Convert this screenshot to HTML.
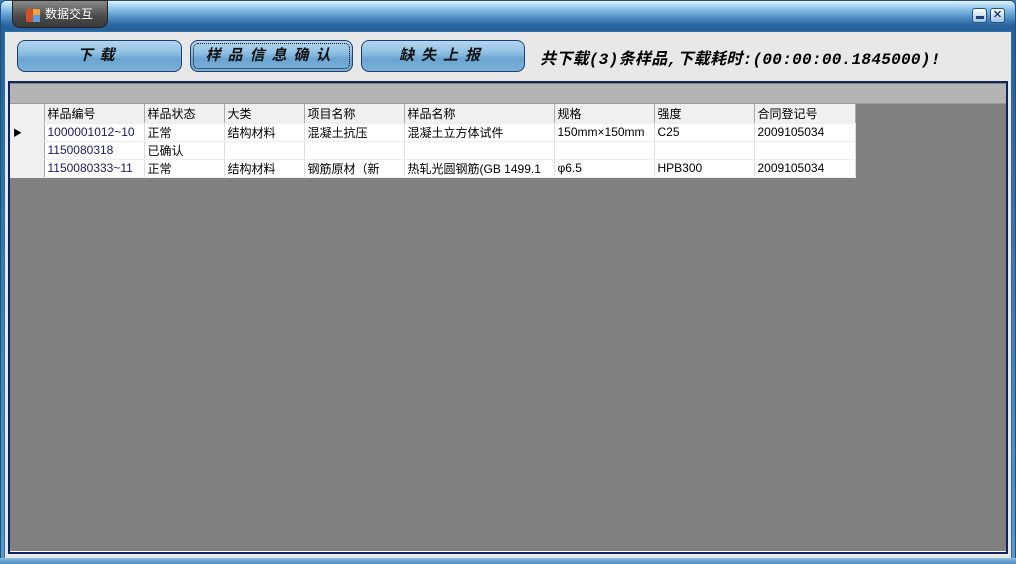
<!DOCTYPE html>
<html><head><meta charset="utf-8"><style>
*{margin:0;padding:0;box-sizing:border-box}
body{width:1016px;height:564px;overflow:hidden;background:#3a7fb5;font-family:"Liberation Sans","Noto Sans CJK SC",sans-serif;position:relative}
.frame{position:absolute;left:0;top:0;width:1016px;height:564px;border-radius:6px 6px 0 0;background:linear-gradient(#e6f4fc 0,#9ccdee 6px,#5f9fd0 14px,#2a64a0 24px,#255f98 31px,#5a98cc 100%);border:1px solid #1d4f7e}
.client{position:absolute;left:4px;top:31px;width:1008px;height:528px;background:#e8e8e8;border:1px solid #2f6fa5}
.bottom{position:absolute;left:0;top:558px;width:1016px;height:6px;background:linear-gradient(#8dbbe0,#4a8cc2)}
.tab{position:absolute;left:12px;top:0;width:96px;height:28px;border-radius:0 0 8px 8px;background:linear-gradient(#8a8a8a,#4a4a4a 60%,#3a3a3a);border:1px solid #222;color:#fff;font-size:12px;line-height:26px;padding-left:32px}
.ico{position:absolute;left:13px;top:8px;width:14px;height:13px;background:linear-gradient(90deg,#d0502a 50%,#f4a23a 50%);}
.ico:after{content:"";position:absolute;left:7px;top:6px;width:7px;height:7px;background:#5aa0e0}
.wb{position:absolute;top:8px;width:15px;height:15px;border-radius:3px;background:linear-gradient(#fff,#9cc4e6);border:1px solid #2a4f7a}
.btn{position:absolute;top:40px;height:32px;border-radius:8px;border:1px solid #1e3f73;background:linear-gradient(#b5d6ef 0,#8ebfe2 40%,#6aa4d0 60%,#7ab1da 100%);font-style:italic;font-size:15px;font-weight:bold;text-align:center;line-height:30px;color:#111;letter-spacing:7px}
.msg{position:absolute;left:540px;top:45px;font-family:"Liberation Mono","Noto Sans CJK SC",monospace;font-style:italic;font-weight:bold;font-size:16px;color:#000;letter-spacing:0.3px}
.grid{position:absolute;left:8px;top:81px;width:1000px;height:473px;border:2px solid #0d2460;background:#808080}
.grid .in{position:absolute;left:0;top:1px;right:0;bottom:0;border:1px solid #fff;border-width:1px 0 1px 0}
.band{position:absolute;left:0;top:1px;width:996px;height:20px;background:#b4b4b4;border-bottom:1px solid #999}
table{position:absolute;left:0;top:21px;border-collapse:collapse;font-size:12px;background:#fff}
td{height:18px;padding:0 3px;white-space:nowrap;overflow:hidden;border-right:1px solid #ddd;border-bottom:1px solid #eee}
tr.h td{background:#f0f0f0;border-right:1px solid #aaa;height:19px}
td.rh{background:#f0f0f0;border-right:1px solid #aaa;width:34px}
</style></head><body>
<div class="frame"></div>
<div class="client"></div>
<div class="bottom"></div>
<div class="tab"><div class="ico"></div>数据交互</div>
<div class="wb" style="left:972px"><div style="position:absolute;left:3px;top:7px;width:8px;height:3px;background:#1e3f73"></div></div>
<div class="wb" style="left:990px;font-size:11px;line-height:12px;text-align:center;color:#1e3f73;font-weight:bold">✕</div>
<div class="btn" style="left:17px;width:165px">下载</div>
<div class="btn" style="left:190px;width:163px;outline:1px dotted #000;outline-offset:-4px">样品信息确认</div>
<div class="btn" style="left:361px;width:164px">缺失上报</div>
<div class="msg">共下载(3)条样品,下载耗时:(00:00:00.1845000)!</div>
<div class="grid"><div class="in"></div><div class="band"></div>
<table>
<tr class="h"><td style="width:34px"></td><td style="width:100px">样品编号</td><td style="width:80px">样品状态</td><td style="width:80px">大类</td><td style="width:100px">项目名称</td><td style="width:150px">样品名称</td><td style="width:100px">规格</td><td style="width:100px">强度</td><td style="width:101px">合同登记号</td></tr>
<tr><td class="rh" style="font-size:9px">▶</td><td style="color:#1a1a60">1000001012~10</td><td>正常</td><td>结构材料</td><td>混凝土抗压</td><td>混凝土立方体试件</td><td>150mm×150mm</td><td>C25</td><td>2009105034</td></tr>
<tr><td class="rh"></td><td style="color:#1a1a60">1150080318</td><td>已确认</td><td></td><td></td><td></td><td></td><td></td><td></td></tr>
<tr><td class="rh"></td><td style="color:#1a1a60">1150080333~11</td><td>正常</td><td>结构材料</td><td>钢筋原材（新</td><td>热轧光圆钢筋(GB 1499.1</td><td>φ6.5</td><td>HPB300</td><td>2009105034</td></tr>
</table></div>
</body></html>
